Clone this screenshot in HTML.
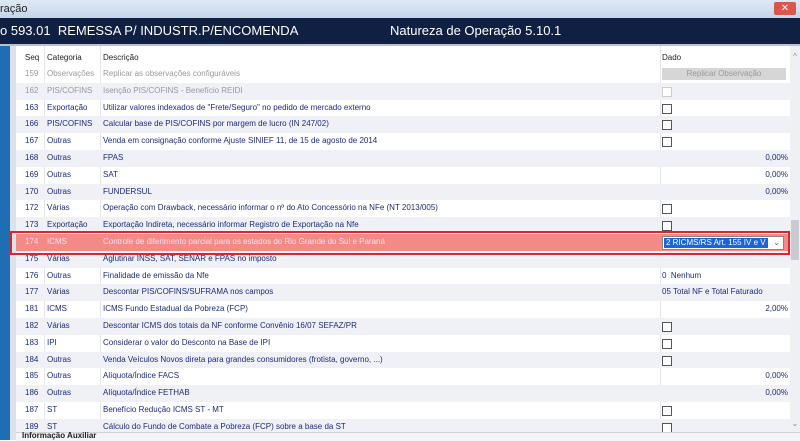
<!DOCTYPE html><html><head><style>
body{margin:0;width:800px;height:440px;overflow:hidden;background:#fff;font-family:"Liberation Sans",sans-serif;position:relative}
.t{position:absolute;left:0;top:0;width:800px;height:18px;background:linear-gradient(#dfe9f5,#c5d6ea);font-size:11px;color:#222;line-height:18px}
.x{position:absolute;right:4px;top:2px;width:22px;height:13px;background:#d9564a;border-radius:2px;color:#fff;font-size:10px;text-align:center;line-height:13px}
.h{position:absolute;left:0;top:18px;width:800px;height:26px;background:#102042;color:#fff;font-size:13px;line-height:26px;border-bottom:2px solid #b9c2d2}
.ls{position:absolute;left:0;top:46px;width:10px;height:394px;background:#1f6db3}
.fr{position:absolute;left:10px;top:46px;width:6px;height:394px;background:#dde3ec}
.tb{position:absolute;left:16px;top:46px;width:774px;height:386px;background:#fff;overflow:hidden}
.sb{position:absolute;left:790px;top:46px;width:10px;height:386px;background:#eef0f3;font-size:8px;color:#888;text-align:center}
.r{position:absolute;left:0;width:774px;height:16.8px;font-size:8px;color:#1d2a7a;line-height:16.8px}
.r.a{background:#eff1f6}.r.g{color:#999}
.r span{position:absolute;white-space:nowrap}
.s{left:9px}.c{left:31px}.d{left:87px}.v{right:2px}.k{left:646px}
.cb{position:absolute;left:646px;top:4px;width:8px;height:8px;border:1px solid #555;background:#fff}
.vl{position:absolute;top:0;width:1px;height:386px;background:#e2e5ea}
</style></head><body>
<div class="t">ração<div class="x">✕</div></div>
<div class="h"><span style="position:absolute;left:0">o 593.01&nbsp; REMESSA P/ INDUSTR.P/ENCOMENDA</span><span style="position:absolute;left:390px">Natureza de Operação 5.10.1</span></div>
<div class="ls"></div><div class="fr"></div>
<div class="tb">
<div class="vl" style="left:28px"></div><div class="vl" style="left:84px"></div><div class="vl" style="left:644px"></div>
<div class="r" style="top:4px;color:#222"><span class="s">Seq</span><span class="c">Categoria</span><span class="d">Descrição</span><span class="k">Dado</span></div>
<div class="r g" style="top:20px"><span class="s">159</span><span class="c">Observações</span><span class="d">Replicar as observações configuráveis</span><span style="left:646px;top:2px;width:124px;height:12px;background:#d6d6d6;color:#999;text-align:center;line-height:12px">Replicar Observação</span></div>
<div class="r a g" style="top:36.8px"><span class="s">162</span><span class="c">PIS/COFINS</span><span class="d">Isenção PIS/COFINS - Benefício REIDI</span><i class="cb" style="border-color:#ccc"></i></div>
<div class="r" style="top:53.6px"><span class="s">163</span><span class="c">Exportação</span><span class="d">Utilizar valores indexados de "Frete/Seguro" no pedido de mercado externo</span><i class="cb"></i></div>
<div class="r a" style="top:70.4px"><span class="s">166</span><span class="c">PIS/COFINS</span><span class="d">Calcular base de PIS/COFINS por margem de lucro (IN 247/02)</span><i class="cb"></i></div>
<div class="r" style="top:87.2px"><span class="s">167</span><span class="c">Outras</span><span class="d">Venda em consignação conforme Ajuste SINIEF 11, de 15 de agosto de 2014</span><i class="cb"></i></div>
<div class="r a" style="top:104px"><span class="s">168</span><span class="c">Outras</span><span class="d">FPAS</span><span class="v">0,00%</span></div>
<div class="r" style="top:120.8px"><span class="s">169</span><span class="c">Outras</span><span class="d">SAT</span><span class="v">0,00%</span></div>
<div class="r a" style="top:137.6px"><span class="s">170</span><span class="c">Outras</span><span class="d">FUNDERSUL</span><span class="v">0,00%</span></div>
<div class="r" style="top:154.4px"><span class="s">172</span><span class="c">Várias</span><span class="d">Operação com Drawback, necessário informar o nº do Ato Concessório na NFe (NT 2013/005)</span><i class="cb"></i></div>
<div class="r a" style="top:171.2px"><span class="s">173</span><span class="c">Exportação</span><span class="d">Exportação Indireta, necessário informar Registro de Exportação na Nfe</span><i class="cb"></i></div>
<div class="r" style="top:188px;background:#f48a86;color:#fde"><span class="s">174</span><span class="c">ICMS</span><span class="d">Controle de diferimento parcial para os estados do Rio Grande do Sul e Paraná</span><span style="left:646px;top:2px;width:120px;height:12px;background:#fff;border:1px solid #888;line-height:12px"><span style="left:1px;top:1px;background:#1a66d6;color:#fff;line-height:10px;padding:0 2px">2 RICMS/RS Art. 155 IV e V</span><span style="right:3px;color:#666">⌄</span></span></div>
<div class="r a" style="top:204.8px"><span class="s">175</span><span class="c">Várias</span><span class="d">Aglutinar INSS, SAT, SENAR e FPAS no imposto</span></div>
<div class="r" style="top:221.6px"><span class="s">176</span><span class="c">Outras</span><span class="d">Finalidade de emissão da Nfe</span><span class="k">0 &nbsp;Nenhum</span></div>
<div class="r a" style="top:238.4px"><span class="s">177</span><span class="c">Várias</span><span class="d">Descontar PIS/COFINS/SUFRAMA nos campos</span><span class="k">05 Total NF e Total Faturado</span></div>
<div class="r" style="top:255.2px"><span class="s">181</span><span class="c">ICMS</span><span class="d">ICMS Fundo Estadual da Pobreza (FCP)</span><span class="v">2,00%</span></div>
<div class="r a" style="top:272px"><span class="s">182</span><span class="c">Várias</span><span class="d">Descontar ICMS dos totais da NF conforme Convênio 16/07 SEFAZ/PR</span><i class="cb"></i></div>
<div class="r" style="top:288.8px"><span class="s">183</span><span class="c">IPI</span><span class="d">Considerar o valor do Desconto na Base de IPI</span><i class="cb"></i></div>
<div class="r a" style="top:305.6px"><span class="s">184</span><span class="c">Outras</span><span class="d">Venda Veículos Novos direta para grandes consumidores (frotista, governo, ...)</span><i class="cb"></i></div>
<div class="r" style="top:322.4px"><span class="s">185</span><span class="c">Outras</span><span class="d">Alíquota/Índice FACS</span><span class="v">0,00%</span></div>
<div class="r a" style="top:339.2px"><span class="s">186</span><span class="c">Outras</span><span class="d">Alíquota/Índice FETHAB</span><span class="v">0,00%</span></div>
<div class="r" style="top:356px"><span class="s">187</span><span class="c">ST</span><span class="d">Benefício Redução ICMS ST - MT</span><i class="cb"></i></div>
<div class="r a" style="top:372.8px"><span class="s">189</span><span class="c">ST</span><span class="d">Cálculo do Fundo de Combate a Pobreza (FCP) sobre a base da ST</span><i class="cb"></i></div>
</div>
<div class="sb"><div style="margin-top:6px">^</div><div style="position:absolute;top:174px;left:1px;width:8px;height:40px;background:#c8ccd2"></div><div style="position:absolute;bottom:4px;width:10px">⌄</div></div>
<div style="position:absolute;left:10px;top:231px;width:780px;height:24px;border:2px solid #d9262b;box-sizing:border-box"></div>
<div style="position:absolute;left:16px;top:432px;width:784px;height:8px;background:#f3f4f6;border-top:1px solid #cfd4da"></div>
<div style="position:absolute;left:22px;top:431px;font-size:8px;font-weight:bold;color:#222;line-height:10px">Informação Auxiliar</div>
</body></html>
